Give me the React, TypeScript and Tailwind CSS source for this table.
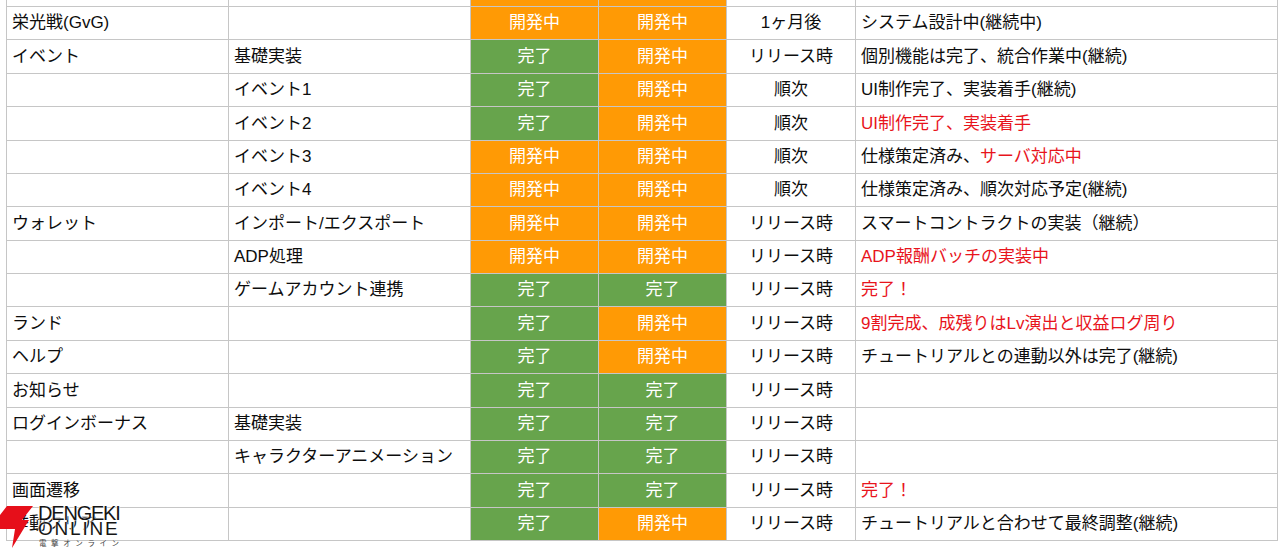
import React from "react";

type Row = {
  a: string;
  b: string;
  c: "g" | "o";
  d: "g" | "o";
  e: string;
  f: string;
  fRed?: string;
  fAllRed?: boolean;
};

const rows: Row[] = [
  { a: "栄光戦(GvG)", b: "", c: "o", d: "o", e: "1ヶ月後", f: "システム設計中(継続中)" },
  { a: "イベント", b: "基礎実装", c: "g", d: "o", e: "リリース時", f: "個別機能は完了、統合作業中(継続)" },
  { a: "", b: "イベント1", c: "g", d: "o", e: "順次", f: "UI制作完了、実装着手(継続)" },
  { a: "", b: "イベント2", c: "g", d: "o", e: "順次", f: "UI制作完了、実装着手", fAllRed: true },
  { a: "", b: "イベント3", c: "o", d: "o", e: "順次", f: "仕様策定済み、", fRed: "サーバ対応中" },
  { a: "", b: "イベント4", c: "o", d: "o", e: "順次", f: "仕様策定済み、順次対応予定(継続)" },
  { a: "ウォレット", b: "インポート/エクスポート", c: "o", d: "o", e: "リリース時", f: "スマートコントラクトの実装（継続）" },
  { a: "", b: "ADP処理", c: "o", d: "o", e: "リリース時", f: "ADP報酬バッチの実装中", fAllRed: true },
  { a: "", b: "ゲームアカウント連携", c: "g", d: "g", e: "リリース時", f: "完了！", fAllRed: true },
  { a: "ランド", b: "", c: "g", d: "o", e: "リリース時", f: "9割完成、成残りはLv演出と収益ログ周り", fAllRed: true },
  { a: "ヘルプ", b: "", c: "g", d: "o", e: "リリース時", f: "チュートリアルとの連動以外は完了(継続)" },
  { a: "お知らせ", b: "", c: "g", d: "g", e: "リリース時", f: "" },
  { a: "ログインボーナス", b: "基礎実装", c: "g", d: "g", e: "リリース時", f: "" },
  { a: "", b: "キャラクターアニメーション", c: "g", d: "g", e: "リリース時", f: "" },
  { a: "画面遷移", b: "", c: "g", d: "g", e: "リリース時", f: "完了！", fAllRed: true },
  { a: "挙動クリア", b: "", c: "g", d: "o", e: "リリース時", f: "チュートリアルと合わせて最終調整(継続)" },
];

function Status({ s }: { s: "g" | "o" }) {
  return (
    <div
      className={
        "flex items-center justify-center border-r border-b border-[#c6c6c6] text-white " +
        (s === "g" ? "bg-[#67a44c]" : "bg-[#ff9a05]")
      }
    >
      {s === "g" ? "完了" : "開発中"}
    </div>
  );
}

export default function App() {
  const cell = "flex items-center border-r border-b border-[#c6c6c6] pl-[5px] whitespace-nowrap overflow-hidden";
  return (
    <div
      className="relative w-[1280px] h-[548px] overflow-hidden bg-white text-[17px] text-[#0d0d0d]"
      style={{ fontFamily: '"Liberation Sans", "Noto Sans CJK JP", sans-serif' }}
    >
      <div className="ml-[6px] w-[1272px] border-l border-[#c6c6c6] grid grid-cols-[222px_242px_128px_128px_129px_422px] auto-rows-[33.375px] [grid-template-rows:7px]">
        <div className="border-r border-b border-[#c6c6c6]" />
        <div className="border-r border-b border-[#c6c6c6]" />
        <div className="border-r border-b border-[#c6c6c6] bg-[#ff9a05]" />
        <div className="border-r border-b border-[#c6c6c6] bg-[#ff9a05]" />
        <div className="border-r border-b border-[#c6c6c6]" />
        <div className="border-r border-b border-[#c6c6c6]" />
        {rows.map((r, i) => (
          <React.Fragment key={i}>
            <div className={cell}>{r.a}</div>
            <div className={cell}>{r.b}</div>
            <Status s={r.c} />
            <Status s={r.d} />
            <div className="flex items-center justify-center border-r border-b border-[#c6c6c6] whitespace-nowrap">
              {r.e}
            </div>
            <div className={cell + (r.fAllRed ? " text-[#e8141c]" : "")}>
              {r.f}
              {r.fRed && <span className="text-[#e8141c]">{r.fRed}</span>}
            </div>
          </React.Fragment>
        ))}
      </div>

      {/* Watermark logo */}
      <div className="absolute left-0 bottom-0 w-[124px] h-[42px] pointer-events-none">
        <svg className="absolute left-0 top-0" width="36" height="42" viewBox="0 0 36 42">
          <polygon points="7,0 33,0 22,14 29,14 12,42 15,23 0,23 0,9" fill="#e60f1a" />
        </svg>
        <div
          className="absolute left-[38px] top-[-3px] leading-none text-[20px] tracking-[-1.2px] text-[#151515] [text-shadow:0_0_2px_#fff,0_0_2px_#fff,0_0_1px_#fff]"
          style={{ fontFamily: '"Liberation Sans", sans-serif' }}
        >
          DENGEKI
        </div>
        <div
          className="absolute left-[38px] top-[13px] leading-none text-[19px] tracking-[1.8px] text-[#151515] [text-shadow:0_0_2px_#fff,0_0_2px_#fff,0_0_1px_#fff]"
          style={{ fontFamily: '"Liberation Sans", sans-serif' }}
        >
          ONLINE
        </div>
        <div
          className="absolute left-[39px] top-[33px] leading-none text-[7.5px] tracking-[4.6px] text-[#444] [text-shadow:0_0_1px_#fff]"
          style={{ fontFamily: '"Noto Sans CJK JP", sans-serif' }}
        >
          電撃オンライン
        </div>
      </div>
    </div>
  );
}
